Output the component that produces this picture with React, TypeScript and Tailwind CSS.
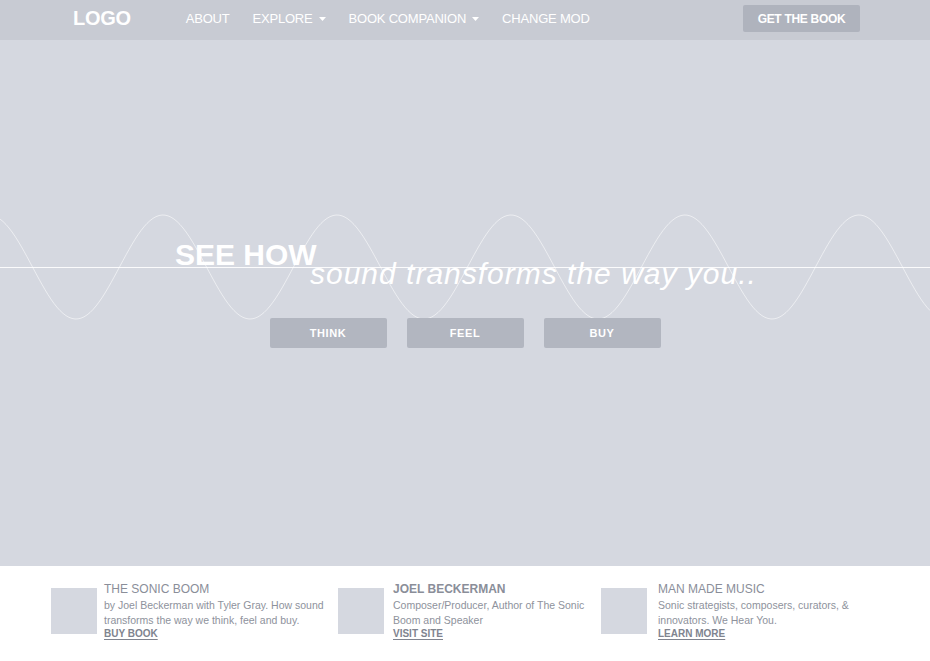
import React from 'react';

const font = { fontFamily: '"Liberation Sans", Arial, sans-serif' };

// sine wave drawn across the hero, computed once
const wavePath = (() => {
    const pts: string[] = [];
    for (let x = 0; x <= 930; x += 3) {
        const y = 227 - 52 * Math.cos((2 * Math.PI * (x - 163)) / 174);
        pts.push(`${x === 0 ? 'M' : 'L'}${x} ${y.toFixed(2)}`);
    }
    return pts.join(' ');
})();

function Caret() {
    return (
        <svg width="7" height="4" viewBox="0 0 7 4" className="ml-[6px]">
            <path d="M0 0 H7 L3.5 4 Z" fill="#ffffff" />
        </svg>
    );
}

const footerItems = [
    { title: 'THE SONIC BOOM', bold: false, text: 'by Joel Beckerman with Tyler Gray. How sound transforms the way we think, feel and buy.', link: 'BUY BOOK', w: 'w-[287px]', tw: 'w-[222px]', gap: 'gap-[7px]' },
    { title: 'JOEL BECKERMAN', bold: true, text: 'Composer/Producer, Author of The Sonic Boom and Speaker', link: 'VISIT SITE', w: 'w-[263px]', tw: 'w-[200px]', gap: 'gap-[9px]' },
    { title: 'MAN MADE MUSIC', bold: false, text: 'Sonic strategists, composers, curators, & innovators. We Hear You.', link: 'LEARN MORE', w: 'w-[260px]', tw: 'w-[200px]', gap: 'gap-[11px]' },
];

export default function App() {
    return (
        <div className="w-[930px] h-[661px] bg-white overflow-hidden" style={font}>
            {/* HEADER */}
            <header className="h-10 bg-[#c8cbd3] flex items-center pl-[73px] pr-[70px]">
                <div className="text-white font-bold text-[20px] leading-none -mt-[5px] tracking-[-0.3px]">LOGO</div>
                <nav className="flex items-center gap-[23px] ml-[55px] text-white text-[13px] leading-none -mt-[3px] tracking-[-0.2px]">
                    <span>ABOUT</span>
                    <span className="flex items-center">EXPLORE <Caret /></span>
                    <span className="flex items-center">BOOK COMPANION <Caret /></span>
                    <span>CHANGE MOD</span>
                </nav>
                <button className="ml-auto w-[117px] h-[27px] -mt-[3px] bg-[#afb3bd] rounded-[2px] text-white font-bold text-[12px] tracking-[-0.3px]">GET THE BOOK</button>
            </header>

            {/* HERO */}
            <section className="relative h-[526px] bg-[#d5d8e0] overflow-hidden">
                <svg className="absolute inset-0" width="930" height="526" viewBox="0 0 930 526">
                    <path d={wavePath} fill="none" stroke="#ffffff" strokeOpacity="0.55" strokeWidth="1" />
                    <line x1="0" y1="227.5" x2="930" y2="227.5" stroke="#ffffff" strokeOpacity="0.9" strokeWidth="1" />
                </svg>
                <div className="relative flex flex-col items-center pt-[200px]">
                    <div className="w-[580px]">
                        <div className="text-white font-bold text-[30px] leading-none">SEE HOW</div>
                        <div className="text-white italic text-[30px] leading-none ml-[135px] -mt-[11px] tracking-[1px] whitespace-nowrap">sound transforms the way you..</div>
                    </div>
                    <div className="flex gap-5 mt-[29px]">
                        {['THINK', 'FEEL', 'BUY'].map(b => (
                            <button key={b} className="w-[117px] h-[30px] bg-[#b2b6c0] rounded-[2px] text-white font-bold text-[11px] tracking-[0.6px]">{b}</button>
                        ))}
                    </div>
                </div>
            </section>

            {/* FOOTER */}
            <footer className="h-[95px] bg-white flex pl-[51px] pt-[16px]">
                {footerItems.map(it => (
                    <div key={it.title} className={`flex ${it.gap} ${it.w}`}>
                        <div className="w-[46px] h-[46px] bg-[#d5d8e0] mt-[6px] shrink-0" />
                        <div className={it.tw}>
                            <div className={`text-[12px] leading-[15px] text-[#8a8e99] ${it.bold ? 'font-bold' : ''}`}>{it.title}</div>
                            <div className="text-[10.5px] leading-[14.5px] text-[#8e929c] mt-[1px]">{it.text}</div>
                            <div className="text-[10px] leading-[13px] font-bold text-[#80848f] underline underline-offset-[2px]">{it.link}</div>
                        </div>
                    </div>
                ))}
            </footer>
        </div>
    );
}
